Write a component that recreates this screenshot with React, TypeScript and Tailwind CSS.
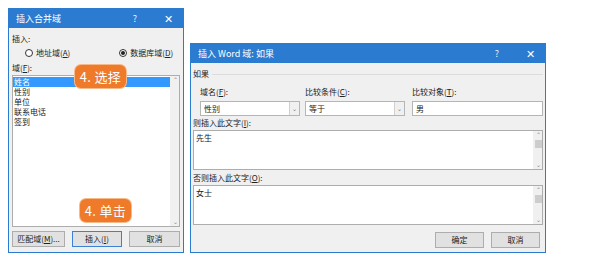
import { ReactNode } from 'react'

const font = { fontFamily: '"Noto Sans CJK SC", "Noto Sans", sans-serif' }

function TitleBar({ title, help = true }: { title: string; help?: boolean }) {
  return (
    <div className="flex h-[19px] items-center bg-[#2b7bd0] pl-[7px] pr-[10px] text-[9px] text-white">
      <span className="flex-1">{title}</span>
      {help && <span className="mr-[27px] text-[9px] opacity-90">?</span>}
      <span className="text-[11px] leading-none">✕</span>
    </div>
  )
}

function Btn({ children, w, active }: { children: ReactNode; w: string; active?: boolean }) {
  return (
    <div
      className={`flex h-[16px] items-center justify-center bg-[#e1e1e1] text-[8px] text-[#222] ${w} ${
        active ? 'border border-[#3b82d6]' : 'border border-[#adadad]'
      }`}
    >
      {children}
    </div>
  )
}

function Callout({ text, className }: { text: string; className: string }) {
  return (
    <div
      className={`absolute flex h-[23px] w-[51px] items-center justify-center rounded-[6px] bg-[#ee7a2a] text-[13px] tracking-wide text-white ring-1 ring-[#f6b98a] ${className}`}
    >
      {text}
    </div>
  )
}

function ScrollTrack({ thumb }: { thumb?: boolean }) {
  return (
    <div className="flex w-[9px] flex-col items-center justify-between border-l border-[#f0f0f0] bg-[#f0f0f0] py-[1px] text-[6px] leading-none text-[#888]">
      <span>⌃</span>
      {thumb && <div className="mb-auto mt-[2px] h-[8px] w-[7px] bg-[#cdcdcd]" />}
      <span>⌄</span>
    </div>
  )
}

function Select({ value, w }: { value: string; w: string }) {
  return (
    <div className={`flex h-[15px] items-center border border-[#b5b5b5] bg-white ${w}`}>
      <span className="flex-1 pl-[3px] text-[8px] text-[#222]">{value}</span>
      <div className="flex h-full w-[10px] items-center justify-center border-l border-[#d0d0d0] bg-[#f0f0f0] text-[6px] text-[#777]">
        ⌄
      </div>
    </div>
  )
}

export default function App() {
  const fields = ['姓名', '性别', '单位', '联系电话', '签到']
  return (
    <div className="relative h-[259px] w-[598px] bg-white" style={font}>
      {/* left dialog */}
      <div className="absolute left-[8px] top-[8px] flex h-[245px] w-[176px] flex-col border border-[#2b7bd0] bg-[#f0f0f0]">
        <TitleBar title="插入合并域" />
        <div className="flex flex-1 flex-col px-[3px] text-[8px] text-[#222]">
          <div className="mt-[5px]">插入:</div>
          <div className="mt-[2px] flex items-center">
            <div className="ml-[13px] flex items-center gap-[3px]">
              <span className="h-[8px] w-[8px] rounded-full border border-[#333] bg-white" />
              <span>
                地址域(<u>A</u>)
              </span>
            </div>
            <div className="ml-[49px] flex items-center gap-[3px]">
              <span className="flex h-[8px] w-[8px] items-center justify-center rounded-full border border-[#333] bg-white">
                <span className="h-[4px] w-[4px] rounded-full bg-[#222]" />
              </span>
              <span>
                数据库域(<u>D</u>)
              </span>
            </div>
          </div>
          <div className="mt-[3px]">
            域(<u>F</u>):
          </div>
          <div className="mt-[1px] flex h-[152px] w-[168px] border border-[#adadad] bg-white">
            <div className="flex-1 pt-[1px]">
              {fields.map((f, i) => (
                <div
                  key={f}
                  className={`h-[10px] pl-[1px] leading-[10px] ${i === 0 ? 'bg-[#3399ff] text-white' : ''}`}
                >
                  {f}
                </div>
              ))}
            </div>
            <ScrollTrack />
          </div>
          <div className="mt-[4px] flex gap-[7px]">
            <Btn w="w-[53px]">
              匹配域(<u>M</u>)...
            </Btn>
            <Btn w="w-[50px]" active>
              插入(<u>I</u>)
            </Btn>
            <Btn w="w-[51px]">取消</Btn>
          </div>
        </div>
      </div>

      {/* right dialog */}
      <div className="absolute left-[190px] top-[43px] flex h-[210px] w-[356px] flex-col border border-[#2b7bd0] bg-[#f0f0f0]">
        <TitleBar title="插入 Word 域: 如果" />
        <div className="flex flex-1 flex-col px-[2px] text-[8px] text-[#222]">
          <div className="mt-[5px] flex items-center gap-[3px]">
            <span>如果</span>
            <div className="h-px flex-1 border-t border-[#dcdcdc]" />
          </div>
          <div className="mt-[6px] flex">
            <div className="ml-[7px] flex flex-col gap-[3px]">
              <span>
                域名(<u>F</u>):
              </span>
              <Select value="性别" w="w-[100px]" />
            </div>
            <div className="ml-[5px] flex flex-col gap-[3px]">
              <span>
                比较条件(<u>C</u>):
              </span>
              <Select value="等于" w="w-[100px]" />
            </div>
            <div className="ml-[7px] flex flex-col gap-[3px]">
              <span>
                比较对象(<u>T</u>):
              </span>
              <div className="flex h-[15px] w-[131px] items-center border border-[#b5b5b5] bg-white pl-[3px]">男</div>
            </div>
          </div>
          <div className="mt-[1px]">
            则插入此文字(<u>I</u>):
          </div>
          <div className="mt-[1px] flex h-[40px] w-[350px] border border-[#adadad] bg-white">
            <div className="flex-1 pl-[2px] pt-[1px]">先生</div>
            <ScrollTrack thumb />
          </div>
          <div className="mt-[2px]">
            否则插入此文字(<u>O</u>):
          </div>
          <div className="mt-[1px] flex h-[40px] w-[350px] border border-[#adadad] bg-white">
            <div className="flex-1 pl-[2px] pt-[1px]">女士</div>
            <ScrollTrack thumb />
          </div>
          <div className="mt-[7px] flex justify-end gap-[7px] pr-[3px]">
            <Btn w="w-[49px]">确定</Btn>
            <Btn w="w-[49px]">取消</Btn>
          </div>
        </div>
      </div>

      <Callout text="4. 选择" className="left-[75px] top-[65px]" />
      <Callout text="4. 单击" className="left-[80px] top-[199px]" />
    </div>
  )
}
